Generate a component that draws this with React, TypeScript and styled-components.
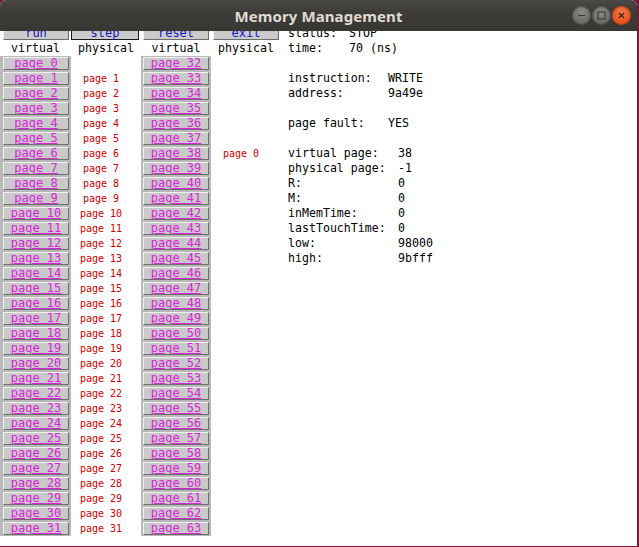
import React from "react";
import styled, { createGlobalStyle } from "styled-components";

const Global = createGlobalStyle`
  html, body { margin: 0; padding: 0; background: #761a36; overflow: hidden; }
  #root { width: 639px; height: 547px; }
`;

const Window = styled.div`
  width: 637px;
  height: 546px;
  background: #ffffff;
  border-radius: 6px 6px 0 0;
  overflow: hidden;
  display: flex;
  flex-direction: column;
`;

const TitleBar = styled.div`
  height: 31px;
  flex: none;
  background: linear-gradient(#4a4945, #3c3b37 40%, #383733);
  display: flex;
  align-items: center;
  justify-content: center;
  position: relative;
`;

const Title = styled.div`
  font-family: "Noto Sans", "Open Sans", sans-serif;
  font-weight: 700;
  font-size: 15px;
  color: #dfdbd2;
  letter-spacing: 0.1px;
`;

const Controls = styled.div`
  position: absolute;
  right: 6px;
  top: 6px;
  display: flex;
  gap: 1px;
`;

const Circle = styled.div<{ $close?: boolean }>`
  width: 19px;
  height: 19px;
  border-radius: 50%;
  display: flex;
  align-items: center;
  justify-content: center;
  background: ${(p) =>
    p.$close
      ? "radial-gradient(circle at 50% 35%, #f47a4a, #e2501c 70%, #c2400f)"
      : "radial-gradient(circle at 50% 35%, #8a8984, #6a6965 70%, #55544f)"};
  box-shadow: inset 0 0 0 1px ${(p) => (p.$close ? "#b8410f" : "#4a4945")};
`;

const Content = styled.div`
  display: flex;
  flex: 1;
`;

const PagesPanel = styled.div`
  width: 281px;
  display: flex;
  flex-direction: column;
`;

const ClipRow = styled.div`
  height: 10px;
  overflow: hidden;
  display: flex;
  align-items: flex-end;
`;

const HeadButtons = styled.div`
  display: grid;
  grid-template-columns: 71px 70px 70px 70px;
  height: 15px;
`;

const HeadButton = styled.div<{ $focused?: boolean; $pad: number }>`
  margin-left: ${(p) => p.$pad}px;
  width: ${(p) => (p.$focused ? 68 : 66)}px;
  height: 14px;
  box-sizing: border-box;
  background: #cbcbcb;
  border: 1px solid;
  border-color: ${(p) =>
    p.$focused ? "#1a1a1a" : "#f2f2f2 #6c6c6c #6c6c6c #f2f2f2"};
  font-family: "DejaVu Sans Mono", monospace;
  font-size: 12px;
  line-height: 13px;
  color: #1616c8;
  text-align: center;
`;

const Grid = styled.div`
  display: grid;
  grid-template-columns: 71px 70px 70px 70px;
  grid-auto-rows: 15px;
`;

const HeadLabel = styled.div`
  font-family: "DejaVu Sans Mono", monospace;
  font-size: 11.6px;
  line-height: 15px;
  color: #000;
  text-align: center;
`;

const ButtonCell = styled.div<{ $pad: number }>`
  background: #b9b9b9;
  padding-left: ${(p) => p.$pad}px;
  display: flex;
  align-items: center;
`;

const PageButton = styled.div`
  width: 66px;
  height: 13px;
  box-sizing: border-box;
  background: #c9c9c9;
  border: 1px solid;
  border-color: #f0f0f0 #6e6e6e #6e6e6e #f0f0f0;
  font-family: "DejaVu Sans Mono", monospace;
  font-size: 12px;
  line-height: 11px;
  color: #dd22dd;
  text-align: center;
  text-decoration: underline;
  text-underline-offset: 1px;
  white-space: nowrap;
  overflow: hidden;
`;

const PhysCell = styled.div`
  font-family: "DejaVu Sans Mono", monospace;
  font-size: 10px;
  line-height: 15px;
  color: #cc0000;
  text-align: center;
  padding-right: 10px;
  white-space: nowrap;
`;

const InfoPanel = styled.div`
  padding-left: 7px;
  display: flex;
  flex-direction: column;
`;

const InfoRow = styled.div<{ $labelWidth: number }>`
  display: grid;
  grid-template-columns: ${(p) => p.$labelWidth}px auto;
  height: 15px;
  font-family: "DejaVu Sans Mono", monospace;
  font-size: 11.6px;
  line-height: 15px;
  color: #000;
  white-space: pre;
`;

const Blank = styled.div`
  height: 15px;
`;

const MinIcon = () => (
  <svg width="9" height="9" viewBox="0 0 9 9">
    <line x1="1" y1="4.5" x2="8" y2="4.5" stroke="#3a3935" strokeWidth="1.2" />
  </svg>
);
const MaxIcon = () => (
  <svg width="9" height="9" viewBox="0 0 9 9">
    <rect x="1" y="1" width="7" height="7" fill="none" stroke="#3a3935" strokeWidth="1.1" />
  </svg>
);
const CloseIcon = () => (
  <svg width="9" height="9" viewBox="0 0 9 9">
    <path d="M2 2 L7 7 M7 2 L2 7" stroke="#4a1a08" strokeWidth="1.3" />
  </svg>
);

const info: { label: string; value: string; w: number }[][] = [
  [
    { label: "instruction:", value: "WRITE", w: 100 },
    { label: "address:", value: "9a49e", w: 100 },
  ],
  [{ label: "page fault:", value: "YES", w: 100 }],
  [
    { label: "virtual page:", value: "38", w: 110 },
    { label: "physical page:", value: "-1", w: 110 },
    { label: "R:", value: "0", w: 110 },
    { label: "M:", value: "0", w: 110 },
    { label: "inMemTime:", value: "0", w: 110 },
    { label: "lastTouchTime:", value: "0", w: 110 },
    { label: "low:", value: "98000", w: 110 },
    { label: "high:", value: "9bfff", w: 110 },
  ],
];

export default function App() {
  const rows = Array.from({ length: 32 }, (_, i) => i);
  return (
    <>
      <Global />
      <Window>
        <TitleBar>
          <Title>Memory Management</Title>
          <Controls>
            <Circle>
              <MinIcon />
            </Circle>
            <Circle>
              <MaxIcon />
            </Circle>
            <Circle $close>
              <CloseIcon />
            </Circle>
          </Controls>
        </TitleBar>
        <Content>
          <PagesPanel>
            <ClipRow>
              <HeadButtons>
                <HeadButton $pad={3}>run</HeadButton>
                <HeadButton $pad={0} $focused>
                  step
                </HeadButton>
                <HeadButton $pad={2}>reset</HeadButton>
                <HeadButton $pad={2}>exit</HeadButton>
              </HeadButtons>
            </ClipRow>
            <Grid>
              <HeadLabel>virtual</HeadLabel>
              <HeadLabel>physical</HeadLabel>
              <HeadLabel>virtual</HeadLabel>
              <HeadLabel>physical</HeadLabel>
              {rows.map((i) => (
                <React.Fragment key={i}>
                  <ButtonCell $pad={3}>
                    <PageButton>page {i}</PageButton>
                  </ButtonCell>
                  <PhysCell>{i === 0 ? "" : `page ${i}`}</PhysCell>
                  <ButtonCell $pad={2}>
                    <PageButton>page {i + 32}</PageButton>
                  </ButtonCell>
                  <PhysCell>{i + 32 === 38 ? "page 0" : ""}</PhysCell>
                </React.Fragment>
              ))}
            </Grid>
          </PagesPanel>
          <InfoPanel>
            <ClipRow>
              <InfoRow $labelWidth={61}>
                <span>status:</span>
                <span>STOP</span>
              </InfoRow>
            </ClipRow>
            <InfoRow $labelWidth={61}>
              <span>time:</span>
              <span>70 (ns)</span>
            </InfoRow>
            {info.map((group, gi) => (
              <React.Fragment key={gi}>
                <Blank />
                {group.map((r) => (
                  <InfoRow key={r.label} $labelWidth={r.w}>
                    <span>{r.label}</span>
                    <span>{r.value}</span>
                  </InfoRow>
                ))}
              </React.Fragment>
            ))}
          </InfoPanel>
        </Content>
      </Window>
    </>
  );
}
